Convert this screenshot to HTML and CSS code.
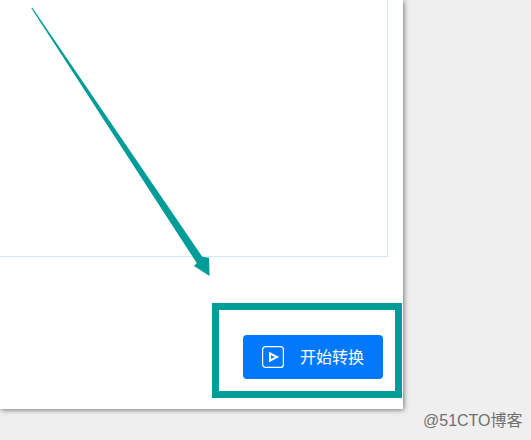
FILE: index.html
```html
<!DOCTYPE html>
<html lang="zh">
<head>
<meta charset="utf-8">
<title>开始转换</title>
<link rel="stylesheet" href="styles.css">
</head>
<body>
<main class="panel">
  <section class="dropzone"></section>
  <footer class="footer">
    <div class="highlight">
      <button class="start" type="button">
        <svg class="start-icon" viewBox="0 0 22 22" width="22" height="22" aria-hidden="true">
          <rect x="0.6" y="0.6" width="20.8" height="20.8" rx="3" fill="none" stroke="#fff" stroke-width="1.2"/>
          <path d="M8 7.4 L15 11 L8 14.6 Z" fill="none" stroke="#fff" stroke-width="2" stroke-linejoin="miter"/>
        </svg>
        <span class="start-label">开始转换</span>
      </button>
    </div>
  </footer>
</main>
<svg class="arrow" viewBox="0 0 531 440" width="531" height="440" aria-hidden="true">
  <path d="M31.4 8.2 L32.2 7.6 L202.3 256.7 L209 257.7 L209.6 276 L194 266 L196.7 263 Z" fill="#009c98"/>
</svg>
<div class="watermark">@51CTO博客</div>
</body>
</html>
```
FILE: styles.css
```css
html, body {
  margin: 0;
  padding: 0;
  height: 100%;
}

body {
  position: relative;
  width: 531px;
  height: 440px;
  overflow: hidden;
  background: #efefef;
  font-family: "Noto Sans CJK SC", "Liberation Sans", sans-serif;
}

.panel {
  display: flex;
  flex-direction: column;
  width: 403px;
  height: 409px;
  background: #fff;
  box-shadow: 1px 1px 5px rgba(0, 0, 0, 0.5);
}

.dropzone {
  box-sizing: border-box;
  width: 388px;
  height: 257px;
  border-right: 1px solid #d6e8f7;
  border-bottom: 1px solid #d6e8f7;
}

.footer {
  display: flex;
  justify-content: flex-end;
  padding: 46px 1px 0 0;
}

.highlight {
  box-sizing: border-box;
  display: flex;
  justify-content: flex-end;
  width: 190px;
  height: 95px;
  padding: 25px 12px 0 0;
  border: 7px solid #009c98;
}

.start {
  display: flex;
  align-items: center;
  gap: 16px;
  width: 140px;
  height: 44px;
  padding: 0 0 0 19px;
  border: 0;
  border-radius: 4px;
  background: #0279fd;
  color: #fff;
  font-family: inherit;
  font-size: 16px;
  line-height: 22px;
}

.start-icon {
  flex: none;
}

.start-label {
  padding-bottom: 2px;
}

.arrow {
  position: absolute;
  left: 0;
  top: 0;
}

.watermark {
  position: absolute;
  left: 423px;
  top: 411px;
  color: #6f6f6f;
  font-family: "Liberation Sans", "Noto Sans CJK SC", sans-serif;
  font-size: 16px;
  line-height: 20px;
  white-space: nowrap;
}
```
